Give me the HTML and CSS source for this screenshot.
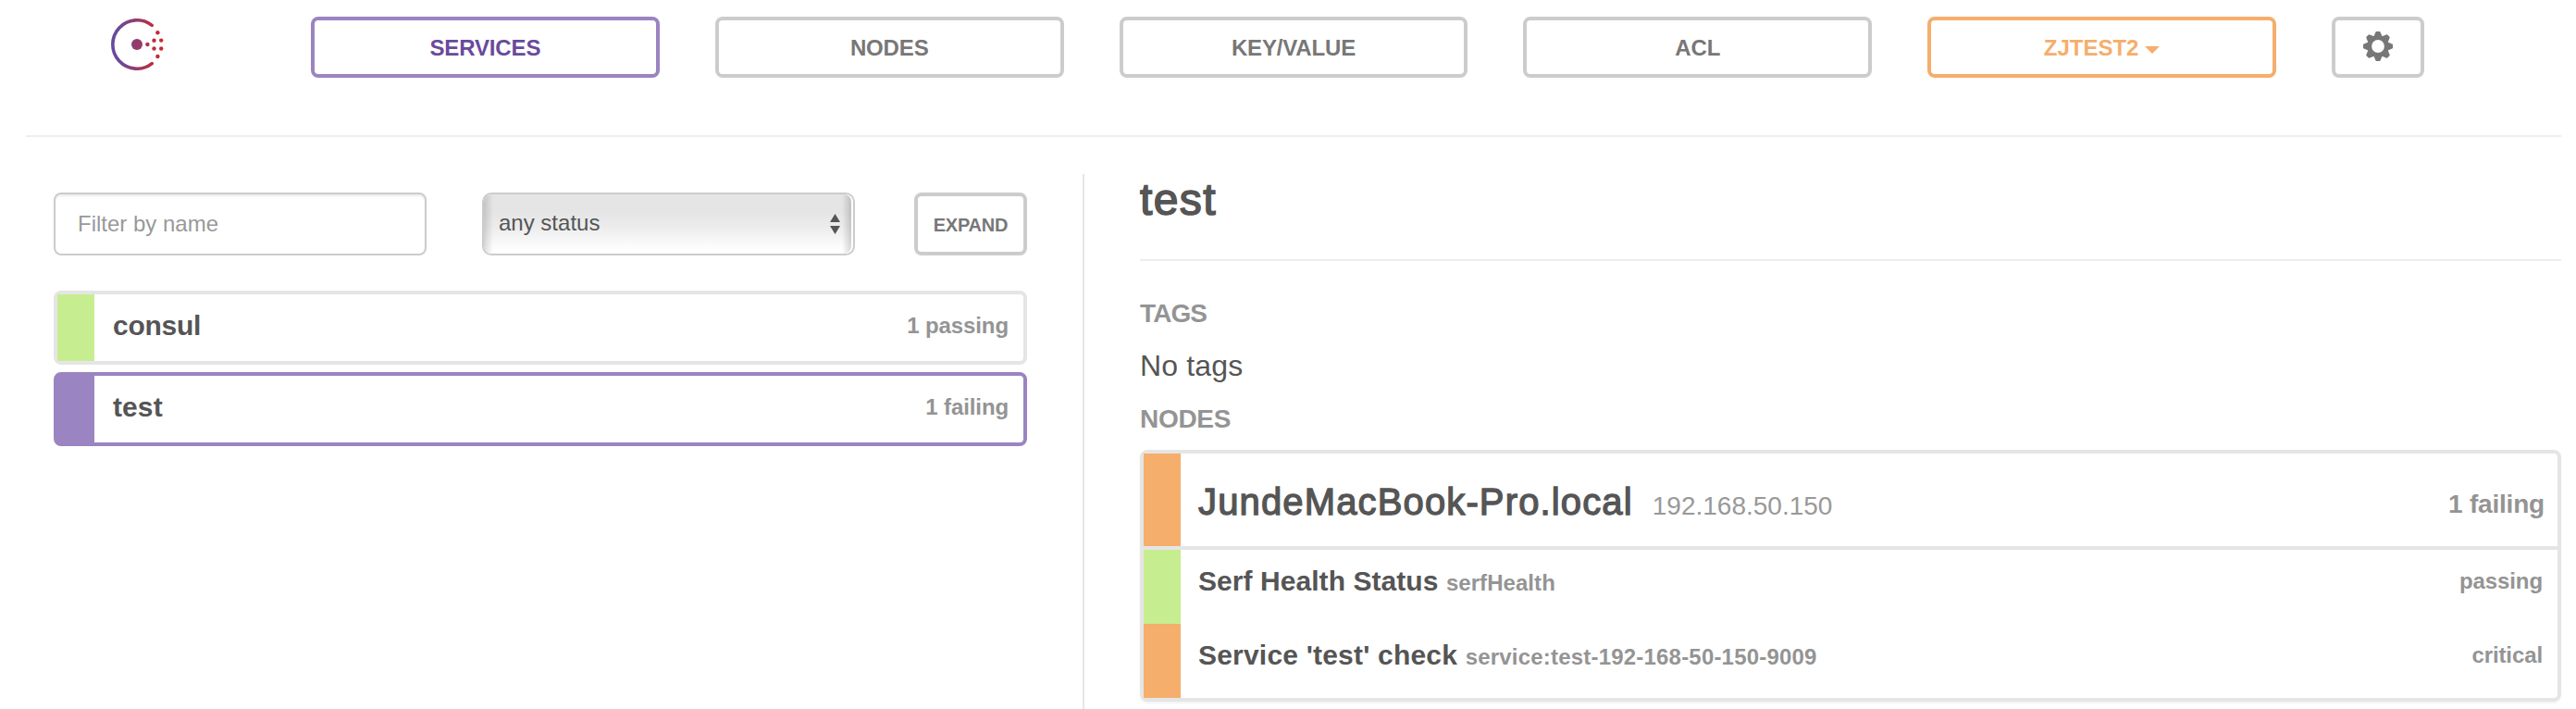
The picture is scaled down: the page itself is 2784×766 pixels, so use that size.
FILE: index.html
```html
<!DOCTYPE html>
<html lang="en">
<head>
<meta charset="utf-8">
<title>Consul</title>
<link rel="stylesheet" href="styles.css">
</head>
<body>
<header class="topbar">
  <svg class="logo" viewBox="0 0 60 56" width="60" height="56">
    <defs>
      <linearGradient id="brand" gradientUnits="userSpaceOnUse" x1="0" y1="0" x2="60" y2="0">
        <stop offset="0.12" stop-color="#694a9c"/>
        <stop offset="0.85" stop-color="#c62a33"/>
      </linearGradient>
    </defs>
    <path d="M44.2 7.4A26.2 26.2 0 1 0 44.2 48.6" fill="none" stroke="url(#brand)" stroke-width="3.6" stroke-linecap="round"/>
    <g fill="url(#brand)">
      <circle cx="28" cy="28" r="6"/>
      <circle cx="39.4" cy="28" r="2.2"/>
      <circle cx="46.5" cy="23.7" r="2.2"/>
      <circle cx="54.2" cy="23.6" r="2.2"/>
      <circle cx="46.5" cy="32.5" r="2.2"/>
      <circle cx="54.2" cy="32.5" r="2.2"/>
      <circle cx="50.4" cy="15.2" r="2.2"/>
      <circle cx="50.4" cy="41" r="2.2"/>
    </g>
  </svg>
  <nav class="nav">
    <a class="btn btn-active">SERVICES</a>
    <a class="btn">NODES</a>
    <a class="btn">KEY/VALUE</a>
    <a class="btn">ACL</a>
    <a class="btn btn-dc">ZJTEST2<span class="caret"></span></a>
    <a class="btn btn-gear">
      <svg viewBox="-16 -16 32 32" width="32" height="32">
        <defs><path id="tooth" d="M-4.8 -10L-2.6 -15.2Q-2.4 -16 -1.6 -16H1.6Q2.4 -16 2.6 -15.2L4.8 -10Z"/></defs>
        <circle r="9.3" fill="none" stroke="#777" stroke-width="4.8"/>
        <g fill="#777">
          <use href="#tooth"/>
          <use href="#tooth" transform="rotate(45)"/>
          <use href="#tooth" transform="rotate(90)"/>
          <use href="#tooth" transform="rotate(135)"/>
          <use href="#tooth" transform="rotate(180)"/>
          <use href="#tooth" transform="rotate(225)"/>
          <use href="#tooth" transform="rotate(270)"/>
          <use href="#tooth" transform="rotate(315)"/>
        </g>
      </svg>
    </a>
  </nav>
</header>
<main class="content">
  <section class="list">
    <div class="filters">
      <input class="filter" type="text" placeholder="Filter by name">
      <div class="select">
        <div class="select-face">
          <span>any status</span>
          <svg class="arrows" viewBox="0 0 11 22" width="11" height="22"><path d="M0 9L5.5 0L11 9ZM0 13L5.5 22L11 13Z" fill="#555"/></svg>
        </div>
      </div>
      <a class="expand">EXPAND</a>
    </div>
    <div class="service">
      <div class="bar green"></div>
      <div class="name">consul</div>
      <div class="status">1 passing</div>
    </div>
    <div class="service service-active">
      <div class="bar purple"></div>
      <div class="name">test</div>
      <div class="status">1 failing</div>
    </div>
  </section>
  <section class="detail">
    <h1 class="title">test</h1>
    <h5 class="label label-tags">TAGS</h5>
    <p class="tags">No tags</p>
    <h5 class="label">NODES</h5>
    <div class="panel">
      <div class="node">
        <div class="bar orange"></div>
        <div class="node-name">JundeMacBook-Pro.local<small class="ip">192.168.50.150</small></div>
        <div class="node-status">1 failing</div>
      </div>
      <div class="check">
        <div class="bar green"></div>
        <div class="name">Serf Health Status <small class="id">serfHealth</small></div>
        <div class="status">passing</div>
      </div>
      <div class="check">
        <div class="bar orange"></div>
        <div class="name name-wide">Service 'test' check <small class="id">service:test-192-168-50-150-9009</small></div>
        <div class="status">critical</div>
      </div>
    </div>
  </section>
</main>
</body>
</html>
```
FILE: styles.css
```css
* { box-sizing: border-box; }

body {
  margin: 0;
  height: 766px;
  overflow: hidden;
  display: flex;
  flex-direction: column;
  background: #fff;
  color: #555;
  font: 24px/27px "Liberation Sans", Arial, sans-serif;
}

/* Top navigation */
.topbar {
  display: flex;
  height: 148px;
  margin: 0 16px 0 28px;
  padding: 18px 148px 0 92px;
  border-bottom: 2px solid #eee;
}
.logo { margin-top: 2px; flex: none; }
.nav {
  flex: 1;
  display: flex;
  gap: 60px;
  margin-left: 156px;
}
.btn {
  flex: 1;
  height: 66px;
  padding-top: 16px;
  border: 4px solid #ccc;
  border-radius: 8px;
  color: #777;
  font-weight: bold;
  letter-spacing: -0.15px;
  text-align: center;
}
.btn-active { border-color: #9a84c1; color: #694a9c; }
.btn-dc { border-color: #f5ae6c; color: #f5ae6c; letter-spacing: 0; }
.caret {
  display: inline-block;
  margin-left: 7px;
  vertical-align: 2px;
  border: 8px solid transparent;
  border-top-color: #f5ae6c;
  border-bottom: 0;
}
.btn-gear {
  flex: 0 0 100px;
  display: flex;
  justify-content: center;
  padding-top: 12px;
}

/* Columns */
.content { flex: 1; display: flex; padding: 40px 16px 0 58px; }
.list { width: 1052px; padding-top: 20px; }
.detail {
  flex: 1;
  margin-left: 60px;
  padding: 1px 0 0 60px;
  border-left: 2px solid #e5e5e5;
}

/* Filters */
.filters { display: flex; height: 68px; margin-bottom: 38px; }
.filter {
  width: 403px;
  padding: 0 24px 1px;
  border: 2px solid #ccc;
  border-radius: 8px;
  box-shadow: inset 0 2px 2px rgba(0, 0, 0, 0.075);
  font: inherit;
}
.filter::placeholder { color: #999; opacity: 1; }
.select {
  width: 403px;
  margin: 0 64px 0 60px;
  padding-right: 2px;
  border: 2px solid #ccc;
  border-radius: 10px;
}
.select-face {
  display: flex;
  justify-content: space-between;
  height: 64px;
  padding: 17px 12px 0 16px;
  border-radius: 8px;
  background:
    linear-gradient(90deg, rgba(0, 0, 0, 0.14), transparent 10px, transparent calc(100% - 10px), rgba(0, 0, 0, 0.16)),
    linear-gradient(#e5e5e5 30%, #ececec 55%, #fff 95%);
}
.arrows { margin-top: 4px; }
.expand {
  width: 122px;
  height: 68px;
  padding-top: 20px;
  border: 4px solid #ccc;
  border-radius: 8px;
  color: #777;
  font-size: 20px;
  line-height: 22px;
  font-weight: bold;
  letter-spacing: -0.2px;
  text-align: center;
}

/* Rows */
.service, .check, .node { display: flex; }
.service {
  height: 80px;
  margin-bottom: 8px;
  padding-right: 16px;
  border: 4px solid #e5e5e5;
  border-radius: 8px;
}
.service-active { border-color: #9a84c1; }
.bar { flex: none; width: 40px; }
.green { background: #c6ee90; }
.orange { background: #f5ae6c; }
.purple { background: #9a84c1; }
.name {
  flex: 1;
  padding: 17px 0 0 20px;
  font-size: 30px;
  line-height: 33px;
  font-weight: bold;
}
.service .name { letter-spacing: -0.25px; }
.service-active .name { letter-spacing: 0.1px; }
.status {
  padding-top: 20px;
  color: #949494;
  font-weight: bold;
  letter-spacing: -0.1px;
}

/* Service detail */
.title {
  margin: 0 0 41px;
  padding-bottom: 38px;
  border-bottom: 2px solid #eee;
  font-size: 48px;
  line-height: 53px;
  font-weight: normal;
  letter-spacing: 1.4px;
  -webkit-text-stroke: 1.6px #555;
}
.label {
  margin: 0;
  color: #949494;
  font-size: 28px;
  line-height: 31px;
  font-weight: bold;
  letter-spacing: -0.3px;
}
.label-tags { letter-spacing: -0.9px; }
.tags { margin: 23px 0 24px; font-size: 32px; line-height: 36px; letter-spacing: 0.15px; }
.panel {
  margin-top: 18px;
  border: 4px solid #e5e5e5;
  border-radius: 8px;
  box-shadow: 0 2px 2px rgba(0, 0, 0, 0.05);
}
.node { height: 104px; padding-right: 14px; border-bottom: 4px solid #e5e5e5; }
.node-name {
  flex: 1;
  padding: 30px 0 0 19px;
  font-size: 40px;
  line-height: 44px;
  letter-spacing: 1.14px;
  -webkit-text-stroke: 1.3px #555;
}
.ip {
  margin-left: 21px;
  color: #999;
  font-size: 28px;
  letter-spacing: 0;
  -webkit-text-stroke: 0;
}
.node-status {
  padding-top: 39px;
  color: #949494;
  font-size: 28px;
  line-height: 31px;
  font-weight: bold;
  letter-spacing: -0.2px;
}
.check { height: 80px; padding-right: 16px; }
.check .name { padding-left: 19px; letter-spacing: 0.06px; }
.check .name-wide { letter-spacing: 0.2px; }
.id { color: #949494; font-size: 24px; }
```
